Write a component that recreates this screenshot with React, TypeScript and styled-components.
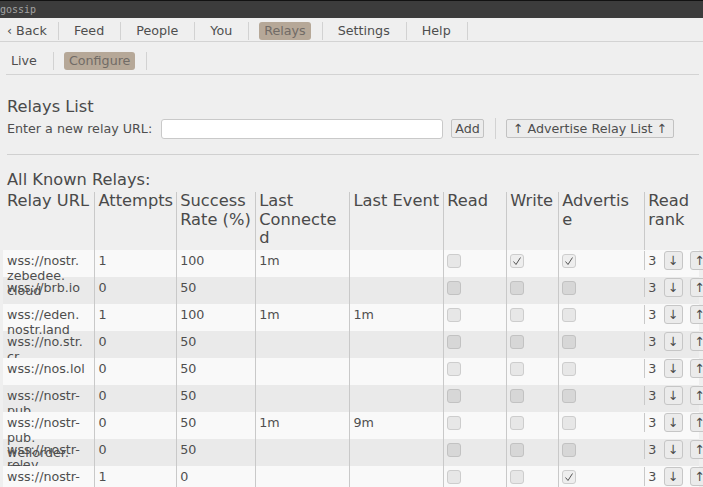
import React from "react";
import styled, { createGlobalStyle } from "styled-components";

const GlobalStyle = createGlobalStyle`
  html, body {
    margin: 0;
    padding: 0;
    background: #efefef;
    overflow: hidden;
  }
  body {
    font-family: "DejaVu Sans", "Liberation Sans", sans-serif;
    font-size: 12.7px;
    color: #4e4e4e;
  }
`;

interface Relay {
  url: string;
  attempts: number;
  rate: number;
  lastConnected: string;
  lastEvent: string;
  read: boolean;
  write: boolean;
  advertise: boolean;
  rank: number;
}

const relays: Relay[] = [
  { url: "wss://nostr.zebedee.cloud", attempts: 1, rate: 100, lastConnected: "1m", lastEvent: "", read: false, write: true, advertise: true, rank: 3 },
  { url: "wss://brb.io", attempts: 0, rate: 50, lastConnected: "", lastEvent: "", read: false, write: false, advertise: false, rank: 3 },
  { url: "wss://eden.nostr.land", attempts: 1, rate: 100, lastConnected: "1m", lastEvent: "1m", read: false, write: false, advertise: false, rank: 3 },
  { url: "wss://no.str.cr", attempts: 0, rate: 50, lastConnected: "", lastEvent: "", read: false, write: false, advertise: false, rank: 3 },
  { url: "wss://nos.lol", attempts: 0, rate: 50, lastConnected: "", lastEvent: "", read: false, write: false, advertise: false, rank: 3 },
  { url: "wss://nostr-pub.nostrrelays.com", attempts: 0, rate: 50, lastConnected: "", lastEvent: "", read: false, write: false, advertise: false, rank: 3 },
  { url: "wss://nostr-pub.wellorder.net", attempts: 0, rate: 50, lastConnected: "1m", lastEvent: "9m", read: false, write: false, advertise: false, rank: 3 },
  { url: "wss://nostr-relay.freeberty.net", attempts: 0, rate: 50, lastConnected: "", lastEvent: "", read: false, write: false, advertise: false, rank: 3 },
  { url: "wss://nostr-relay.untethr.me", attempts: 1, rate: 0, lastConnected: "", lastEvent: "", read: false, write: false, advertise: true, rank: 3 },
];

// header labels as egui wraps them
const headers = ["Relay URL", "Attempts", "Success\nRate (%)", "Last\nConnecte\nd", "Last Event", "Read", "Write", "Advertis\ne", "Read\nrank"];

const COLUMNS = "91px 81.7px 79px 94.3px 93.7px 63px 52px 86px 100px";

// allow line breaks after dots like egui does
const wrapUrl = (url: string) =>
  url.split(".").map((part, i, arr) => (
    <React.Fragment key={i}>
      {part}
      {i < arr.length - 1 && (
        <>
          .<wbr />
        </>
      )}
    </React.Fragment>
  ));

const CheckMark = () => (
  <svg width="12" height="12" viewBox="0 0 12 12">
    <polyline points="2.5,6.5 5,9.5 9.5,2.5" fill="none" stroke="#555" strokeWidth="1" />
  </svg>
);

export default function App() {
  return (
    <>
      <GlobalStyle />
      <TitleBar>gossip</TitleBar>
      <TopNav>
        <NavButton $tight>‹ Back</NavButton>
        <NavSep />
        <NavButton>Feed</NavButton>
        <NavSep />
        <NavButton>People</NavButton>
        <NavSep />
        <NavButton>You</NavButton>
        <NavSep />
        <NavButton $selected>Relays</NavButton>
        <NavSep />
        <NavButton>Settings</NavButton>
        <NavSep />
        <NavButton>Help</NavButton>
        <NavSep />
      </TopNav>
      <Content>
        <SubNav>
          <NavButton>Live</NavButton>
          <NavSep />
          <NavButton $selected>Configure</NavButton>
          <NavSep />
        </SubNav>

        <Heading $top={21.5}>Relays List</Heading>
        <InputRow>
          <span>Enter a new relay URL:</span>
          <UrlInput />
          <SmallButton>Add</SmallButton>
          <InlineSep />
          <SmallButton>↑ Advertise Relay List ↑</SmallButton>
        </InputRow>
        <HRule />

        <Heading $top={15}>All Known Relays:</Heading>
        <Table>
          <HeaderRow>
            {headers.map((h, i) => (
              <HeaderCell key={h} $first={i === 0}>
                {h}
              </HeaderCell>
            ))}
          </HeaderRow>
          {relays.map((r, idx) => {
            const striped = idx % 2 === 1;
            return (
              <Row key={r.url} $striped={striped}>
                <Cell $first>{wrapUrl(r.url)}</Cell>
                <Cell>{r.attempts}</Cell>
                <Cell>{r.rate}</Cell>
                <Cell>{r.lastConnected}</Cell>
                <Cell>{r.lastEvent}</Cell>
                <Cell>
                  <Check $striped={striped} $checked={r.read}>{r.read && <CheckMark />}</Check>
                </Cell>
                <Cell>
                  <Check $striped={striped} $checked={r.write}>{r.write && <CheckMark />}</Check>
                </Cell>
                <Cell>
                  <Check $striped={striped} $checked={r.advertise}>{r.advertise && <CheckMark />}</Check>
                </Cell>
                <RankCell>
                  <span>{r.rank}</span>
                  <RankButton>↓</RankButton>
                  <RankButton>↑</RankButton>
                </RankCell>
              </Row>
            );
          })}
        </Table>
      </Content>
    </>
  );
}

const TitleBar = styled.div`
  height: 17px;
  background: #3c3c3c;
  border-top: 1px solid #121212;
  color: #a2a2a2;
  font-family: "DejaVu Sans Mono", "Liberation Mono", monospace;
  font-size: 10px;
  line-height: 18px;
  padding-left: 0;
`;

const TopNav = styled.div`
  display: flex;
  align-items: center;
  box-sizing: border-box;
  height: 24px;
  padding-top: 3px;
  padding-left: 2px;
  border-bottom: 1px solid #d3d3d3;
`;

const NavButton = styled.div<{ $selected?: boolean; $tight?: boolean }>`
  height: 18.5px;
  line-height: 18.5px;
  padding: ${(p) => (p.$tight ? "0 0 0 5px" : "0 5px")};
  border-radius: 3px;
  background: ${(p) => (p.$selected ? "#b6a898" : "transparent")};
  color: ${(p) => (p.$selected ? "#716b66" : "#4e4e4e")};
  white-space: nowrap;
`;

const NavSep = styled.div`
  width: 1px;
  height: 18px;
  background: #d2d2d2;
  margin: 0 10px 0 11px;
`;

const Content = styled.div`
  padding: 0 4px 0 7px;
`;

const SubNav = styled.div`
  display: flex;
  align-items: center;
  box-sizing: border-box;
  height: 33px;
  padding-top: 6px;
  margin-left: -1px;
  border-bottom: 1px solid #d3d3d3;
`;

const Heading = styled.div<{ $top: number }>`
  margin-top: ${(p) => p.$top}px;
  font-size: 16.25px;
  line-height: 19px;
  color: #4a4a4a;
`;

const InputRow = styled.div`
  display: flex;
  align-items: center;
  height: 20px;
  margin-top: 3px;
  white-space: nowrap;
`;

const UrlInput = styled.div`
  width: 280px;
  height: 18px;
  margin-left: 9px;
  background: #ffffff;
  border: 1px solid #c9c9c9;
  border-radius: 3px;
`;

const SmallButton = styled.div`
  height: 17px;
  line-height: 17px;
  margin-left: 8px;
  padding: 0 3px;
  border: 1px solid #c2c2c2;
  border-radius: 2px;
  background: #ececec;
  &:last-child {
    margin-left: 0;
    padding: 0 6px;
  }
`;

const InlineSep = styled.div`
  width: 1px;
  height: 21px;
  background: #d2d2d2;
  margin: 0 10px 0 11px;
`;

const HRule = styled.div`
  height: 1px;
  margin-top: 15px;
  background: #d0d0d0;
`;

const Table = styled.div`
  margin: 3.5px 0 0 -4px;
`;

const HeaderRow = styled.div`
  display: grid;
  grid-template-columns: ${COLUMNS};
  height: 58px;
`;

const HeaderCell = styled.div<{ $first?: boolean }>`
  box-sizing: border-box;
  font-size: 16.25px;
  line-height: 18.5px;
  white-space: pre;
  color: #4a4a4a;
  padding-left: ${(p) => (p.$first ? "4px" : "3.5px")};
  border-left: ${(p) => (p.$first ? "none" : "1px solid #c9c9c9")};
`;

const Row = styled.div<{ $striped: boolean }>`
  display: grid;
  grid-template-columns: ${COLUMNS};
  height: 27px;
  position: relative;
  z-index: ${(p) => (p.$striped ? 0 : 1)};
  background: ${(p) => (p.$striped ? "#eaeaea" : "#f9f9f9")};
`;

const Cell = styled.div<{ $first?: boolean }>`
  box-sizing: border-box;
  height: 27px;
  padding: 3px ${(p) => (p.$first ? "6px" : "4px")} 0 ${(p) => (p.$first ? "4px" : "3.5px")};
  line-height: 15px;
  border-left: ${(p) => (p.$first ? "none" : "1px solid #c9c9c9")};
`;

const Check = styled.div<{ $striped: boolean; $checked: boolean }>`
  box-sizing: border-box;
  width: 14px;
  height: 14px;
  margin-top: 1px;
  display: flex;
  align-items: center;
  justify-content: center;
  border: 1px solid ${(p) => (p.$striped ? "#c2c2c2" : "#cdcdcd")};
  border-radius: 3px;
  background: ${(p) => (p.$striped ? "#d7d7d7" : p.$checked ? "#eeeeee" : "#e7e7e7")};
`;

const RankCell = styled.div`
  box-sizing: border-box;
  display: flex;
  align-items: center;
  height: 19px;
  margin-top: 1px;
  padding-left: 3.5px;
  border-left: 1px solid #c9c9c9;
  gap: 7.5px;
  & > span {
    width: 8px;
  }
`;

const RankButton = styled.div`
  box-sizing: border-box;
  width: 19px;
  height: 19px;
  line-height: 17px;
  text-align: center;
  border: 1px solid #c6c6c6;
  border-radius: 3px;
  background: #ebebeb;
`;
